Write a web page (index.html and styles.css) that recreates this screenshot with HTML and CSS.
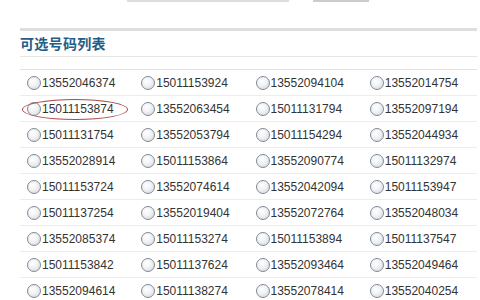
FILE: index.html
```html
<!DOCTYPE html>
<html lang="zh-CN">
<head>
    <meta charset="UTF-8">
    <title>可选号码列表</title>
    <link rel="stylesheet" href="styles.css">
</head>
<body>

<div class="search-bar">
    <div class="search-input"></div>
    <div class="search-btn"></div>
</div>

<div class="panel">
    <h2 class="panel-title">可选号码列表</h2>
    <div class="spacer"></div>

    <table class="numbers">
        <tr>
            <td><label><input type="radio" name="num">13552046374</label></td>
            <td><label><input type="radio" name="num">15011153924</label></td>
            <td><label><input type="radio" name="num">13552094104</label></td>
            <td><label><input type="radio" name="num">13552014754</label></td>
        </tr>
        <tr>
            <td class="marked"><label><input type="radio" name="num">15011153874</label><span class="ring"></span></td>
            <td><label><input type="radio" name="num">13552063454</label></td>
            <td><label><input type="radio" name="num">15011131794</label></td>
            <td><label><input type="radio" name="num">13552097194</label></td>
        </tr>
        <tr>
            <td><label><input type="radio" name="num">15011131754</label></td>
            <td><label><input type="radio" name="num">13552053794</label></td>
            <td><label><input type="radio" name="num">15011154294</label></td>
            <td><label><input type="radio" name="num">13552044934</label></td>
        </tr>
        <tr>
            <td><label><input type="radio" name="num">13552028914</label></td>
            <td><label><input type="radio" name="num">15011153864</label></td>
            <td><label><input type="radio" name="num">13552090774</label></td>
            <td><label><input type="radio" name="num">15011132974</label></td>
        </tr>
        <tr>
            <td><label><input type="radio" name="num">15011153724</label></td>
            <td><label><input type="radio" name="num">13552074614</label></td>
            <td><label><input type="radio" name="num">13552042094</label></td>
            <td><label><input type="radio" name="num">15011153947</label></td>
        </tr>
        <tr>
            <td><label><input type="radio" name="num">15011137254</label></td>
            <td><label><input type="radio" name="num">13552019404</label></td>
            <td><label><input type="radio" name="num">13552072764</label></td>
            <td><label><input type="radio" name="num">13552048034</label></td>
        </tr>
        <tr>
            <td><label><input type="radio" name="num">13552085374</label></td>
            <td><label><input type="radio" name="num">15011153274</label></td>
            <td><label><input type="radio" name="num">15011153894</label></td>
            <td><label><input type="radio" name="num">15011137547</label></td>
        </tr>
        <tr>
            <td><label><input type="radio" name="num">15011153842</label></td>
            <td><label><input type="radio" name="num">15011137624</label></td>
            <td><label><input type="radio" name="num">13552093464</label></td>
            <td><label><input type="radio" name="num">13552049464</label></td>
        </tr>
        <tr>
            <td><label><input type="radio" name="num">13552094614</label></td>
            <td><label><input type="radio" name="num">15011138274</label></td>
            <td><label><input type="radio" name="num">13552078414</label></td>
            <td><label><input type="radio" name="num">13552040254</label></td>
        </tr>
    </table>
</div>

</body>
</html>
```

FILE: styles.css
```css
body {
    margin: 0;
    background: #fff;
    font-family: "Liberation Sans", Arial, sans-serif;
    overflow: hidden;
}
.search-bar {
    display: flex;
    height: 14px;
    padding-left: 127px;
}
.search-input {
    width: 162px;
    height: 2px;
    background: #ddd;
    box-shadow: 0 10px 2px -1px #f2f4f6;
}
.search-btn {
    width: 56px;
    height: 2px;
    margin-left: 24px;
    background: #ccc;
}
.panel {
    margin: 0 3px 0 20px;
    padding-top: 14px;
    position: relative;
}
.panel::before {
    content: "";
    position: absolute;
    top: 14px;
    left: 0;
    right: 0;
    height: 3px;
    background: #dedede;
}
.panel-title {
    margin: 0;
    padding-top: 6px;
    height: 22px;
    font-family: "Noto Sans CJK SC", sans-serif;
    font-size: 14px;
    line-height: 18px;
    font-weight: bold;
    color: #1f5e86;
    letter-spacing: 0.3px;
}
.spacer {
    height: 12px;
    border-top: 1px solid #e6e6e6;
}
.numbers {
    width: 100%;
    border-collapse: collapse;
    table-layout: fixed;
    border-top: 1px solid #e2e2e2;
}
.numbers td {
    height: 25px;
    padding: 0 0 0 6px;
    border-bottom: 1px solid #ececec;
    font-size: 12px;
    color: #333;
    white-space: nowrap;
}
.numbers label {
    display: flex;
    align-items: center;
}
.numbers input {
    width: 14px;
    height: 14px;
    margin: 0 1px 0 1px;
    appearance: none;
    border: 1px solid #7f8c99;
    border-radius: 50%;
    background: radial-gradient(circle at 40% 35%, #fff 0, #f2f3f5 40%, #cfd4d9 100%);
}
.marked {
    position: relative;
}
.ring {
    position: absolute;
    left: 2px;
    top: 3px;
    width: 104px;
    height: 19px;
    border: 1px solid #b04848;
    border-radius: 50%;
}
```
